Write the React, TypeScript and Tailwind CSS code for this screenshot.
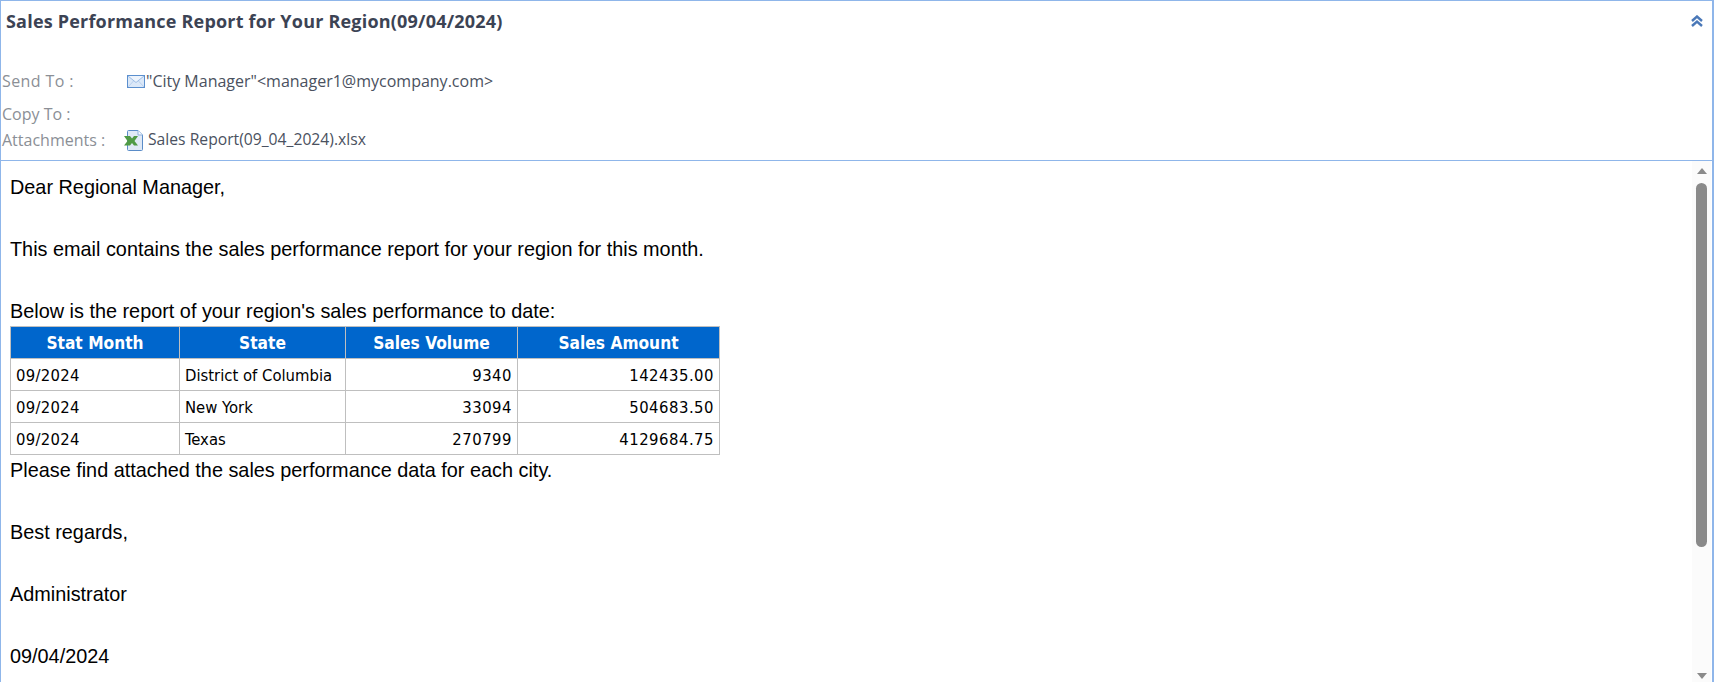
const headCell = "border border-[#bfbfbf] bg-[#0066cc] text-white font-bold text-center text-[17.2px] h-[32px] p-0 pt-[3px]";
const cell = "border border-[#bfbfbf] text-black text-[16.5px] h-[32px] px-[5px] py-0 pt-[4px]";
const num = "tracking-[0.5px] text-right";

const rows = [
  ["09/2024", "District of Columbia", "9340", "142435.00"],
  ["09/2024", "New York", "33094", "504683.50"],
  ["09/2024", "Texas", "270799", "4129684.75"],
];

function MailIcon() {
  return (
    <svg width="18" height="13" viewBox="0 0 18 13" className="shrink-0">
      <rect x="0.5" y="0.5" width="17" height="12" fill="#dbe8f8" stroke="#5b8fce" />
      <path d="M1 1 L9 7.5 L17 1" fill="#eef4fc" stroke="#9dbde6" />
      <path d="M1 12 L6.5 6 M17 12 L11.5 6" fill="none" stroke="#b7cfee" />
    </svg>
  );
}

function ExcelIcon() {
  return (
    <svg width="20" height="21" viewBox="0 0 20 21" className="shrink-0">
      <path d="M3.5 1.5 Q3.5 0.5 4.5 0.5 H14 L18.5 5 V19.5 Q18.5 20.5 17.5 20.5 H4.5 Q3.5 20.5 3.5 19.5 Z" fill="#dfe9f6" stroke="#5a8cc8" />
      <path d="M14 0.5 V5 H18.5" fill="#f4f8fd" stroke="#8fb2de" />
      <path d="M0 6 H6 L8 8.5 L10 6 H14 L10.5 11 L14 15.5 H10 L8 13 L6 15.5 H0 L3.5 11 Z" fill="#4f9a45" />
    </svg>
  );
}

export default function App() {
  return (
    <div className="w-[1715px] h-[682px] overflow-hidden bg-white flex">
      <div className="w-[1714px] h-full flex flex-col border-l border-r-2 border-t border-[#8fb6ea]">
        <header className="h-[160px] shrink-0 flex flex-col border-b border-[#8fb6ea] [font-family:'Open_Sans','Noto_Sans',sans-serif]">
          <div className="h-[41px] flex items-start justify-between pl-[5px] pr-[9px] pt-[12px]">
            <h1 className="text-[18px] font-bold text-[#3c4354] tracking-[0.2px] leading-none -mt-[1px]">
              Sales Performance Report for Your Region(09/04/2024)
            </h1>
            <svg width="12" height="12" viewBox="0 0 12 12" fill="none" stroke="#4a78b8" strokeWidth="2.4" className="mt-[2px]">
              <path d="M1 6 L6 1.5 L11 6" />
              <path d="M1 11 L6 6.5 L11 11" />
            </svg>
          </div>
          <div className="mt-[21px] flex flex-col text-[16px]">
            <div className="h-[36px] flex items-center">
              <span className="w-[126px] pl-[1px] text-[#8b8f96] tracking-[0.4px]">Send To :</span>
              <span className="flex items-center gap-[1px] text-[#4a5160]">
                <MailIcon />
                "City Manager"&lt;manager1@mycompany.com&gt;
              </span>
            </div>
            <div className="h-[30px] flex items-center">
              <span className="w-[125px] pl-[1px] text-[#8b8f96]">Copy To :</span>
            </div>
            <div className="h-[22px] flex items-center">
              <span className="w-[123px] pl-[1px] text-[#8b8f96]">Attachments :</span>
              <span className="flex items-center gap-[4px] text-[#4a5160] text-[15.7px]">
                <ExcelIcon />
                Sales Report(09_04_2024).xlsx
              </span>
            </div>
          </div>
        </header>
        <div className="flex-1 min-h-0 flex">
          <main className="flex-1 min-w-0 pl-[9px] pt-[11px] [font-family:'Liberation_Sans',Arial,sans-serif] text-[19.85px] leading-[31px] text-black">
            <p>Dear Regional Manager,</p>
            <p className="mt-[31px]">This email contains the sales performance report for your region for this month.</p>
            <p className="mt-[31px]">Below is the report of your region's sales performance to date:</p>
            <table className="w-[709px] -mt-[1px] border-collapse table-fixed [font-family:'DejaVu_Sans_Condensed','DejaVu_Sans',sans-serif] leading-none">
              <colgroup>
                <col className="w-[169px]" />
                <col className="w-[166px]" />
                <col className="w-[172px]" />
                <col className="w-[202px]" />
              </colgroup>
              <thead>
                <tr>
                  <th className={headCell}>Stat Month</th>
                  <th className={headCell}>State</th>
                  <th className={headCell}>Sales Volume</th>
                  <th className={headCell}>Sales Amount</th>
                </tr>
              </thead>
              <tbody>
                {rows.map((r) => (
                  <tr key={r[1]}>
                    <td className={`${cell} tracking-[0.3px]`}>{r[0]}</td>
                    <td className={cell}>{r[1]}</td>
                    <td className={`${cell} ${num}`}>{r[2]}</td>
                    <td className={`${cell} ${num}`}>{r[3]}</td>
                  </tr>
                ))}
              </tbody>
            </table>
            <p>Please find attached the sales performance data for each city.</p>
            <p className="mt-[31px]">Best regards,</p>
            <p className="mt-[31px]">Administrator</p>
            <p className="mt-[31px]">09/04/2024</p>
          </main>
          <div className="w-[19px] shrink-0 bg-[#fbfbfb] flex flex-col items-center pt-[7px] pb-[3px] mr-[1px]">
            <div className="w-0 h-0 border-l-[5.5px] border-r-[5.5px] border-b-[6px] border-l-transparent border-r-transparent border-b-[#8a8a8a]" />
            <div className="w-[11px] h-[364px] mt-[9px] rounded-full bg-[#8a8a8a]" />
            <div className="flex-1" />
            <div className="w-0 h-0 border-l-[5.5px] border-r-[5.5px] border-t-[6px] border-l-transparent border-r-transparent border-t-[#8a8a8a]" />
          </div>
        </div>
      </div>
    </div>
  );
}
